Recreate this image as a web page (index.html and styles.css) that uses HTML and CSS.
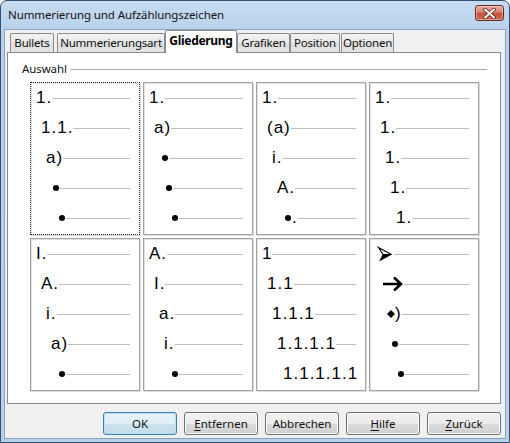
FILE: index.html
```html
<!DOCTYPE html>
<html lang="de">
<head>
<meta charset="utf-8">
<title>Nummerierung und Aufzählungszeichen</title>
<link rel="stylesheet" href="styles.css">
</head>
<body>
<div class="window">
  <div class="titlebar">
    <span class="title">Nummerierung und Aufzählungszeichen</span>
    <div class="close">
      <svg width="13" height="11" viewBox="0 0 13 11"><path d="M2 1.5 L11 9.5 M11 1.5 L2 9.5" stroke="#5a1e16" stroke-width="3.6" stroke-linecap="round"/><path d="M2 1.5 L11 9.5 M11 1.5 L2 9.5" stroke="#fff" stroke-width="2" stroke-linecap="round"/></svg>
    </div>
  </div>
  <div class="client">
    <div class="tabs">
      <div class="tab w-bullets">Bullets</div>
      <div class="tab w-num">Nummerierungsart</div>
      <div class="tab sel w-glied">Gliederung</div>
      <div class="tab w-graf">Grafiken</div>
      <div class="tab w-pos">Position</div>
      <div class="tab w-opt">Optionen</div>
    </div>
    <div class="panel">
      <div class="group-head"><span>Auswahl</span><div class="rule"></div></div>
      <div class="grid">
        <div class="cell focus">
          <div class="row l0"><span>1.</span><i class="ln"></i></div>
          <div class="row l1"><span>1.1.</span><i class="ln"></i></div>
          <div class="row l2"><span>a)</span><i class="ln"></i></div>
          <div class="row d3"><b class="dot"></b><i class="ln"></i></div>
          <div class="row d4"><b class="dot"></b><i class="ln"></i></div>
        </div>
        <div class="cell">
          <div class="row l0"><span>1.</span><i class="ln"></i></div>
          <div class="row l1"><span>a)</span><i class="ln"></i></div>
          <div class="row d2"><b class="dot"></b><i class="ln"></i></div>
          <div class="row d3"><b class="dot"></b><i class="ln"></i></div>
          <div class="row d4"><b class="dot"></b><i class="ln"></i></div>
        </div>
        <div class="cell">
          <div class="row l0"><span>1.</span><i class="ln"></i></div>
          <div class="row l1"><span>(a)</span><i class="ln"></i></div>
          <div class="row l2"><span>i.</span><i class="ln"></i></div>
          <div class="row l3"><span>A.</span><i class="ln"></i></div>
          <div class="row d4"><b class="dot"></b><span>.</span><i class="ln"></i></div>
        </div>
        <div class="cell">
          <div class="row l0"><span>1.</span><i class="ln"></i></div>
          <div class="row l1"><span>1.</span><i class="ln"></i></div>
          <div class="row l2"><span>1.</span><i class="ln"></i></div>
          <div class="row l3"><span>1.</span><i class="ln"></i></div>
          <div class="row l4"><span>1.</span><i class="ln"></i></div>
        </div>
        <div class="cell">
          <div class="row l0"><span>I.</span><i class="ln"></i></div>
          <div class="row l1"><span>A.</span><i class="ln"></i></div>
          <div class="row l2"><span>i.</span><i class="ln"></i></div>
          <div class="row l3"><span>a)</span><i class="ln"></i></div>
          <div class="row d4"><b class="dot"></b><i class="ln"></i></div>
        </div>
        <div class="cell">
          <div class="row l0"><span>A.</span><i class="ln"></i></div>
          <div class="row l1"><span>I.</span><i class="ln"></i></div>
          <div class="row l2"><span>a.</span><i class="ln"></i></div>
          <div class="row l3"><span>i.</span><i class="ln"></i></div>
          <div class="row d4"><b class="dot"></b><i class="ln"></i></div>
        </div>
        <div class="cell">
          <div class="row l0"><span>1</span><i class="ln"></i></div>
          <div class="row l1"><span>1.1</span><i class="ln"></i></div>
          <div class="row l2"><span>1.1.1</span><i class="ln"></i></div>
          <div class="row l3"><span>1.1.1.1</span><i class="ln"></i></div>
          <div class="row l4"><span>1.1.1.1.1</span><i class="ln"></i></div>
        </div>
        <div class="cell">
          <div class="row l0"><svg class="ico" width="16" height="16" viewBox="0 0 16 16"><path d="M1.5 1.5 L14.5 8.5 L6 8.5 Z" fill="#fff" stroke="#000" stroke-width="1.2" stroke-linejoin="miter"/><path d="M6 8 L15 8.5 L2 15.5 Z" fill="#000"/></svg><i class="ln"></i></div>
          <div class="row l1"><svg class="ico" width="21" height="16" viewBox="0 0 21 16"><path d="M1 8 L19 8 M12 1.5 L19 8 L12 14.5" fill="none" stroke="#000" stroke-width="2.6"/></svg><i class="ln"></i></div>
          <div class="row l2"><svg class="dia" width="8" height="8" viewBox="0 0 8 8"><path d="M4 0 L8 4 L4 8 L0 4 Z" fill="#000"/></svg><span>)</span><i class="ln"></i></div>
          <div class="row d3"><b class="dot"></b><i class="ln"></i></div>
          <div class="row d4"><b class="dot"></b><i class="ln"></i></div>
        </div>
      </div>
    </div>
    <div class="buttons">
      <div class="btn def">OK</div>
      <div class="btn"><u>E</u>ntfernen</div>
      <div class="btn">Abbrechen</div>
      <div class="btn"><u>H</u>ilfe</div>
      <div class="btn"><u>Z</u>urück</div>
    </div>
  </div>
</div>
</body>
</html>
```

FILE: styles.css
```css
html, body {
  margin: 0;
  padding: 0;
}
body {
  width: 510px;
  height: 443px;
  overflow: hidden;
  font-family: "Noto Sans", "Open Sans", sans-serif;
  color: #000;
  background: #fff;
}
.window {
  box-sizing: border-box;
  width: 510px;
  height: 443px;
  border: 1px solid #34506e;
  border-radius: 7px 7px 0 0;
  background: linear-gradient(#c7dcf2, #bad1ec 28px, #b9d0ea);
  padding: 0 3px 3px 3px;
  display: flex;
  flex-direction: column;
}
.titlebar {
  height: 28px;
  flex: none;
  display: flex;
  justify-content: space-between;
  align-items: flex-start;
  padding: 0 2px 0 4px;
}
.title {
  font-size: 11.5px;
  line-height: 14px;
  margin-top: 7px;
  letter-spacing: -0.1px;
  color: #111;
}
.close {
  margin-top: 4px;
  width: 29px;
  height: 16px;
  box-sizing: border-box;
  border: 1px solid #6b2b23;
  border-radius: 3px;
  background: linear-gradient(#e6aa9d, #d98474 45%, #c64f3b 50%, #cf6b55);
  box-shadow: inset 0 0 0 1px rgba(255,255,255,0.35);
  display: flex;
  align-items: center;
  justify-content: center;
}
.client {
  flex: 1;
  background: #f0f0f0;
  border: 1px solid #8aa3bf;
  display: flex;
  flex-direction: column;
}
.tabs {
  height: 22px;
  flex: none;
  display: flex;
  align-items: flex-end;
  margin-left: 5px;
  position: relative;
  z-index: 1;
}
.tab {
  box-sizing: border-box;
  height: 19px;
  border: 1px solid #898c95;
  border-bottom: none;
  border-radius: 2px 2px 0 0;
  background: linear-gradient(#f3f3f3, #e8e8e8 50%, #dedede 50%, #e3e3e3);
  font-size: 11.5px;
  letter-spacing: -0.2px;
  line-height: 17px;
  text-align: center;
  white-space: nowrap;
  color: #111;
}
.tab.sel {
  height: 23px;
  margin-bottom: -1px;
  background: #fff;
  font-weight: bold;
  font-size: 12px;
  letter-spacing: -0.3px;
  line-height: 20px;
  color: #000;
}
.w-bullets { width: 44px; margin-right: 3px; }
.w-num { width: 108px; }
.w-glied { width: 72px; }
.w-graf { width: 53px; }
.w-pos { width: 50px; margin-right: 1px; }
.w-opt { width: 53px; }
.panel {
  box-sizing: border-box;
  height: 352px;
  flex: none;
  margin: 0 4px 0 2px;
  border: 1px solid #898c95;
  background: #fff;
}
.group-head {
  display: flex;
  align-items: center;
  height: 14px;
  margin: 9px 13px 0 14px;
  font-size: 11.5px;
  letter-spacing: -0.1px;
  line-height: 14px;
  gap: 4px;
  color: #111;
}
.rule {
  flex: 1;
  height: 1px;
  background: #a9a9a9;
}
.grid {
  margin: 6px 0 0 22px;
  display: grid;
  grid-template-columns: repeat(4, 110px);
  grid-template-rows: repeat(2, 153px);
  gap: 3px;
}
.cell {
  box-sizing: border-box;
  border: 1px solid #a3a3a3;
  box-shadow: inset 1px 1px 0 #e2e2e2, 1px 1px 0 #dcdcdc;
  padding-right: 9px;
  background: #fff;
}
.cell.focus {
  border: 1px dotted #222;
}
.row {
  height: 30px;
  display: flex;
  align-items: center;
  font-family: "Liberation Sans", Arial, sans-serif;
  font-size: 17px;
  letter-spacing: 1px;
  line-height: 30px;
  white-space: nowrap;
}
.l0 { padding-left: 5px; }
.l1 { padding-left: 10px; }
.l2 { padding-left: 15px; }
.l3 { padding-left: 20px; }
.l4 { padding-left: 26px; }
.d2 { padding-left: 18px; }
.d3 { padding-left: 22px; }
.d4 { padding-left: 28px; }
.dot {
  flex: none;
  width: 6px;
  height: 6px;
  border-radius: 50%;
  background: #000;
  margin-right: 1px;
}
.ln {
  flex: 1;
  min-width: 0;
  height: 1px;
  margin-left: 0;
  background: #bdbdbd;
}
.ico {
  flex: none;
  margin-left: 2px;
  margin-right: 1px;
}
.dia {
  flex: none;
  margin-left: 2px;
}
.buttons {
  display: flex;
  justify-content: flex-end;
  gap: 7px;
  margin: 8px 4px 0 0;
}
.btn {
  box-sizing: border-box;
  width: 74px;
  height: 23px;
  border: 1px solid #707070;
  border-radius: 3px;
  background: linear-gradient(#f2f2f2, #ebebeb 50%, #dddddd 50%, #cfcfcf);
  box-shadow: inset 0 0 0 1px #fbfbfb;
  font-size: 11.5px;
  line-height: 21px;
  text-align: center;
  color: #111;
}
.btn.def {
  border-color: #3c7fb1;
  background: linear-gradient(#eaf3f8, #e0eef6 50%, #cde3ef 50%, #c4dcea);
  box-shadow: inset 0 0 0 1px #b8e3f6;
}
.btn u {
  text-decoration: underline;
  text-underline-offset: 2px;
}
```
